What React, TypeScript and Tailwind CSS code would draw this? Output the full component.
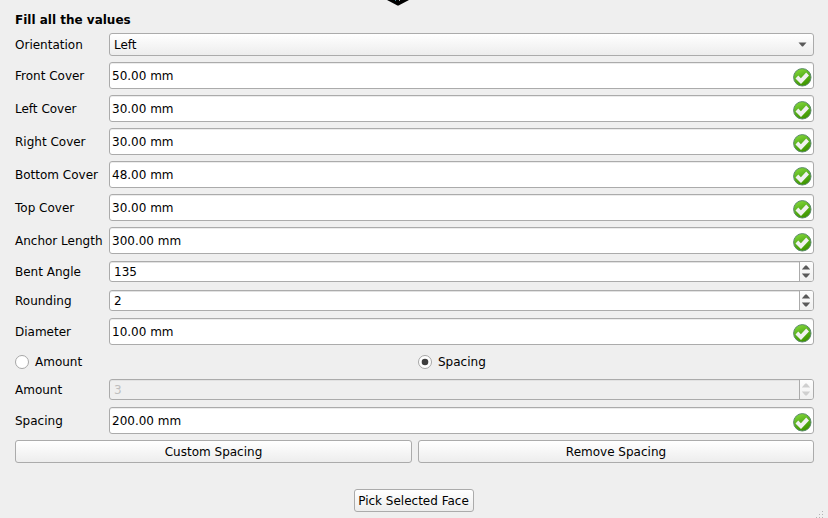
import React from 'react';

const border = 'border border-[#ababab] rounded-[3px]';

function Check() {
  return (
    <svg width="20" height="20" viewBox="0 0 20 20" className="mr-[1px] mt-[3px] shrink-0">
      <defs>
        <linearGradient id="green" x1="0" y1="0" x2="0.4" y2="1">
          <stop offset="0" stopColor="#8be03c" />
          <stop offset="0.5" stopColor="#5fb722" />
          <stop offset="1" stopColor="#419800" />
        </linearGradient>
      </defs>
      <circle cx="10.3" cy="10.3" r="8.7" fill="url(#green)" stroke="#5c8a6c" strokeWidth="1" />
      <path d="M3.5 11.4 L6.3 8.6 L8.9 11.2 L14.2 5.6 L17 8.4 L9 16.9 Z" fill="#f1f1f1" />
    </svg>
  );
}

function Row({ label, h, children }: { label: string; h: string; children: React.ReactNode }) {
  return (
    <div className={`flex shrink-0 items-center ${h}`}>
      <label className="w-[94px] shrink-0">{label}</label>
      {children}
    </div>
  );
}

function Quantity({ label, value }: { label: string; value: string }) {
  return (
    <Row label={label} h="h-[27px]">
      <div className={`flex h-full flex-1 items-center justify-between bg-white pl-[2px] shadow-[inset_0_1px_0_#ececec] ${border}`}>
        <span>{value}</span>
        <Check />
      </div>
    </Row>
  );
}

function Spin({ label, value, disabled = false }: { label: string; value: string; disabled?: boolean }) {
  const color = disabled ? '#cfcfcf' : '#5a5a5a';
  return (
    <Row label={label} h="h-[21px]">
      <div className={`flex h-full flex-1 overflow-hidden shadow-[inset_0_1px_0_#e2e2e2] ${border} ${disabled ? 'bg-[#efefef] text-[#bebebe]' : 'bg-white'}`}>
        <span className="flex flex-1 items-center pl-1">{value}</span>
        <span className="h-full w-[14px] border-l border-[#ababab] bg-gradient-to-b from-[#fdfdfd] to-[#f0f0f0]">
          <svg width="13" height="19" viewBox="0 0 13 19">
            <path d="M1.8 7.5 L5.3 3.5 H6.7 L10.2 7.5 Z M1.8 11.5 H10.2 L6.7 15.5 H5.3 Z" fill={color} />
          </svg>
        </span>
      </div>
    </Row>
  );
}

function Radio({ label, checked = false }: { label: string; checked?: boolean }) {
  return (
    <div className="flex items-center gap-[6px]">
      <svg width="14" height="14" viewBox="0 0 14 14">
        <circle cx="7" cy="7" r="6.5" fill="#fff" stroke="#a6a6a6" />
        {checked && <circle cx="7" cy="7" r="3.3" fill="#3f3f3f" />}
      </svg>
      <span className="pt-[1px]">{label}</span>
    </div>
  );
}

function Button({ children, size }: { children: string; size: string }) {
  return (
    <button className={`flex h-[23px] items-center justify-center whitespace-nowrap bg-gradient-to-b from-white to-[#ededed] ${border} ${size}`}>
      {children}
    </button>
  );
}

export default function App() {
  return (
    <div className="flex h-[518px] w-[828px] flex-col overflow-hidden bg-[#efefef] pl-[15px] pr-[14px] font-['DejaVu_Sans',sans-serif] text-[12px] leading-[14px] text-black">
      <div className="flex h-[13px] shrink-0 justify-center pr-[34px]">
        <svg width="22" height="6" viewBox="0 0 22 6">
          <path d="M0 0 H22 L12.5 5 Q11 6.2 9.5 5 Z" fill="#000" />
          <path d="M8 0 h1 v1 h-1z" fill="#357b8a" />
          <path d="M12 0 h1 v1 h-1z" fill="#aaa" />
        </svg>
      </div>
      <h1 className="h-[20px] shrink-0 font-bold">Fill all the values</h1>
      <Row label="Orientation" h="h-[23px]">
        <div className={`flex h-full flex-1 items-center justify-between bg-gradient-to-b from-white to-[#ededed] pl-1 pr-[6px] ${border}`}>
          <span>Left</span>
          <svg width="9" height="5" viewBox="0 0 9 5">
            <path d="M0.5 0.5 H8.5 L5 4.5 H4 Z" fill="#5a5a5a" />
          </svg>
        </div>
      </Row>
      <div className="mt-[6px] flex shrink-0 flex-col gap-[6px]">
        <Quantity label="Front Cover" value="50.00 mm" />
        <Quantity label="Left Cover" value="30.00 mm" />
        <Quantity label="Right Cover" value="30.00 mm" />
        <Quantity label="Bottom Cover" value="48.00 mm" />
        <Quantity label="Top Cover" value="30.00 mm" />
        <Quantity label="Anchor Length" value="300.00 mm" />
      </div>
      <div className="mb-[7px] mt-[7px] flex shrink-0 flex-col gap-2">
        <Spin label="Bent Angle" value="135" />
        <Spin label="Rounding" value="2" />
      </div>
      <Quantity label="Diameter" value="10.00 mm" />
      <div className="mb-[11px] mt-[9px] grid h-[14px] shrink-0 grid-cols-[403px_1fr]">
        <Radio label="Amount" />
        <Radio label="Spacing" checked />
      </div>
      <Spin label="Amount" value="3" disabled />
      <div className="mb-[6px] mt-[7px] shrink-0">
        <Quantity label="Spacing" value="200.00 mm" />
      </div>
      <div className="flex shrink-0 gap-[6px]">
        <Button size="w-[397px]">Custom Spacing</Button>
        <Button size="w-[396px]">Remove Spacing</Button>
      </div>
      <div className="mt-[26px] flex shrink-0 justify-center pr-[1px]">
        <Button size="w-[120px] pr-[1px]">Pick Selected Face</Button>
      </div>
      <svg className="-mr-[14px] -mt-[1px] shrink-0 self-end" width="14" height="9" viewBox="0 0 14 9">
        <path d="M8 0h1v1h-1z M8 3h1v1h-1z M5 3h1v1h-1z M8 6h1v1h-1z M5 6h1v1h-1z M2 6h1v1h-1z" fill="#b4b4b4" />
      </svg>
    </div>
  );
}
